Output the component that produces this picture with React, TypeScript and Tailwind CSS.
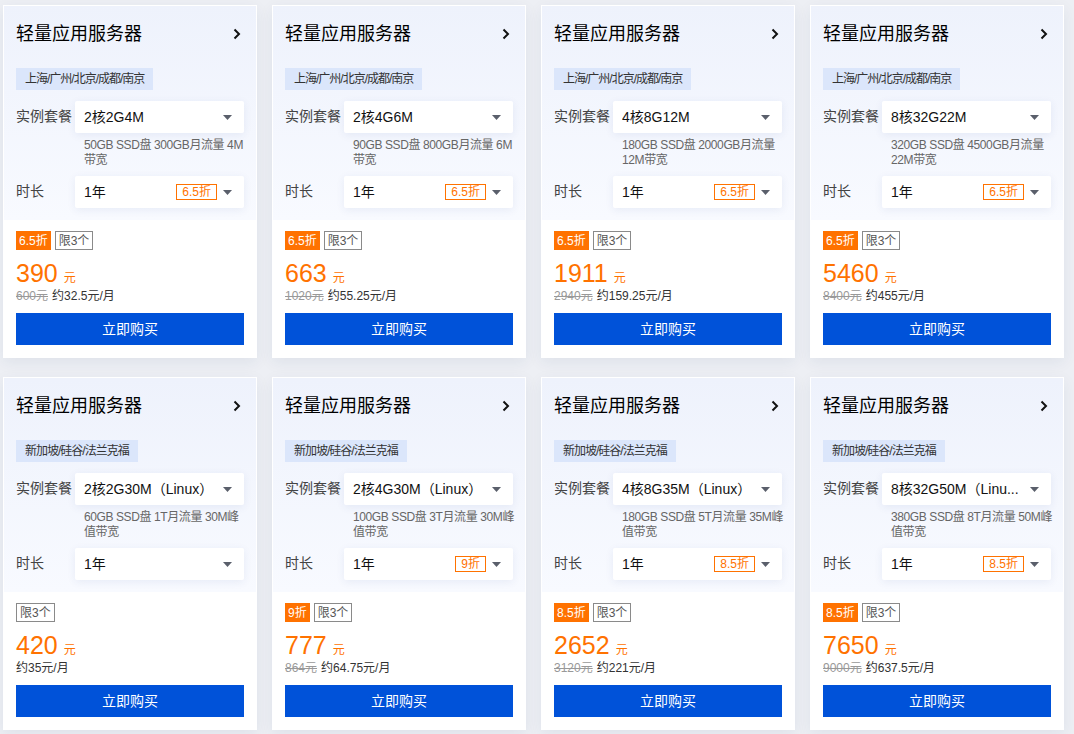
import React from "react";

type Plan = {
  region: string;
  spec: string;
  desc: string[];
  discount?: string;
  price: string;
  oldPrice?: string;
  monthly: string;
};

const ROW1 = "上海/广州/北京/成都/南京";
const ROW2 = "新加坡/硅谷/法兰克福";

const plans: Plan[] = [
  { region: ROW1, spec: "2核2G4M", desc: ["50GB SSD盘 300GB月流量 4M", "带宽"], discount: "6.5折", price: "390", oldPrice: "600元", monthly: "约32.5元/月" },
  { region: ROW1, spec: "2核4G6M", desc: ["90GB SSD盘 800GB月流量 6M", "带宽"], discount: "6.5折", price: "663", oldPrice: "1020元", monthly: "约55.25元/月" },
  { region: ROW1, spec: "4核8G12M", desc: ["180GB SSD盘 2000GB月流量", "12M带宽"], discount: "6.5折", price: "1911", oldPrice: "2940元", monthly: "约159.25元/月" },
  { region: ROW1, spec: "8核32G22M", desc: ["320GB SSD盘 4500GB月流量", "22M带宽"], discount: "6.5折", price: "5460", oldPrice: "8400元", monthly: "约455元/月" },
  { region: ROW2, spec: "2核2G30M（Linux）", desc: ["60GB SSD盘 1T月流量 30M峰", "值带宽"], price: "420", monthly: "约35元/月" },
  { region: ROW2, spec: "2核4G30M（Linux）", desc: ["100GB SSD盘 3T月流量 30M峰", "值带宽"], discount: "9折", price: "777", oldPrice: "864元", monthly: "约64.75元/月" },
  { region: ROW2, spec: "4核8G35M（Linux）", desc: ["180GB SSD盘 5T月流量 35M峰", "值带宽"], discount: "8.5折", price: "2652", oldPrice: "3120元", monthly: "约221元/月" },
  { region: ROW2, spec: "8核32G50M（Linu...", desc: ["380GB SSD盘 8T月流量 50M峰", "值带宽"], discount: "8.5折", price: "7650", oldPrice: "9000元", monthly: "约637.5元/月" },
];

// small dark triangle used in the selects
function Caret() {
  return (
    <svg width="9" height="5" viewBox="0 0 9 5" className="shrink-0">
      <path d="M0 0h9L4.5 5z" fill="#5a5f6b" />
    </svg>
  );
}

function Chevron() {
  return (
    <svg width="8" height="12" viewBox="0 0 8 12">
      <path d="M1.5 1.5 6 6l-4.5 4.5" fill="none" stroke="#111" strokeWidth="2" />
    </svg>
  );
}

function SelectBox({ children, tag }: { children: React.ReactNode; tag?: string }) {
  return (
    <div className="flex h-8 flex-1 min-w-0 items-center rounded-[2px] bg-white pl-[9px] pr-3 shadow-[0_2px_8px_rgba(40,70,140,0.08)]">
      <span className="flex-1 min-w-0 truncate text-[14px] text-[#111]">{children}</span>
      {tag && (
        <span className="ml-2 mr-[6px] flex h-4 items-center border border-[#ff7200] px-[5px] text-[12px] leading-none text-[#ff7200]">
          {tag}
        </span>
      )}
      <Caret />
    </div>
  );
}

function PlanCard({ plan }: { plan: Plan }) {
  return (
    <div className="flex h-[353px] flex-col border border-white bg-white shadow-[0_4px_14px_rgba(30,50,100,0.07)]">
      {/* Top config area */}
      <div className="h-[214px] bg-gradient-to-b from-[#eef2fc] to-[#f8faff] px-3 pt-[15px]">
        <div className="flex h-[26px] items-center justify-between pr-[3px]">
          <span className="text-[18px] text-black">轻量应用服务器</span>
          <Chevron />
        </div>
        <div className="mt-[21px] inline-flex h-[22px] items-center bg-[#dbe6fb] px-[9px] text-[12px] tracking-[-1px] text-[#333]">
          {plan.region}
        </div>
        <div className="mt-[11px] flex">
          <span className="w-[59px] shrink-0 pt-[5px] text-[14px] text-[#444]">实例套餐</span>
          <SelectBox>{plan.spec}</SelectBox>
        </div>
        <div className="mt-[5px] whitespace-nowrap pl-[68px] text-[12px] leading-[15px] tracking-[-0.4px] text-[#666]">
          {plan.desc.map((d) => (
            <div key={d}>{d}</div>
          ))}
        </div>
        <div className="mt-2 flex">
          <span className="w-[59px] shrink-0 pt-[5px] text-[14px] text-[#444]">时长</span>
          <SelectBox tag={plan.discount}>1年</SelectBox>
        </div>
      </div>

      {/* Price area */}
      <div className="flex flex-1 flex-col px-3 pt-[11px]">
        <div className="flex gap-1">
          {plan.discount && (
            <span className="flex h-[19px] items-center bg-[#ff7200] px-[3px] text-[12px] text-white">
              {plan.discount}
            </span>
          )}
          <span className="flex h-[19px] items-center border border-[#8a8a8a] px-[3px] text-[12px] text-[#555]">
            限3个
          </span>
        </div>
        <div className="mt-[8px] flex items-baseline text-[#ff7200]">
          <span className="text-[25px] leading-[30px]">{plan.price}</span>
          <span className="ml-[6px] text-[12px]">元</span>
        </div>
        <div className="flex items-center gap-1 text-[12px] leading-[16px]">
          {plan.oldPrice && <span className="text-[#999] line-through">{plan.oldPrice}</span>}
          <span className="text-[#333]">{plan.monthly}</span>
        </div>
        <button className="mt-[9px] h-8 w-full bg-[#0052d9] text-[14px] text-white">立即购买</button>
      </div>
    </div>
  );
}

export default function App() {
  return (
    <div
      className="min-h-screen bg-[#edeff4] pl-[3px] pt-[5px]"
      style={{ fontFamily: '"Liberation Sans", "Noto Sans CJK SC", sans-serif' }}
    >
      <div className="grid grid-cols-[repeat(4,254px)] gap-x-[15px] gap-y-[19px]">
        {plans.map((p, i) => (
          <PlanCard key={i} plan={p} />
        ))}
      </div>
    </div>
  );
}
